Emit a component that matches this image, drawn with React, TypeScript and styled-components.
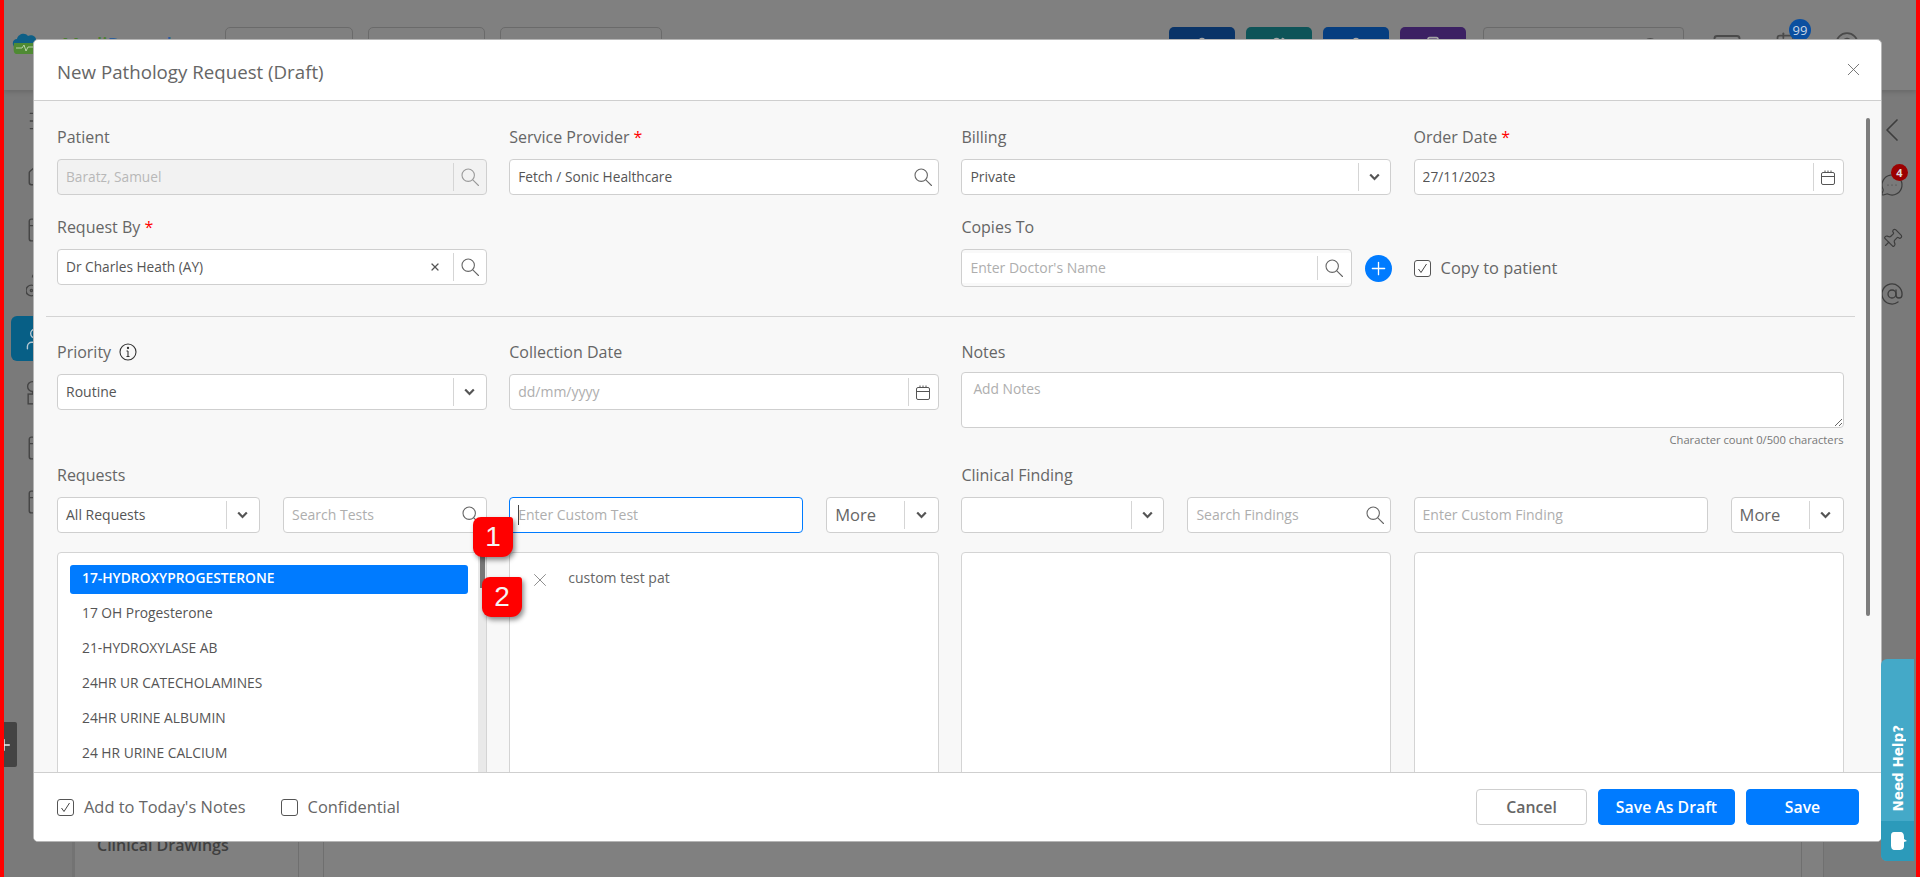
import React from "react";
import styled, { createGlobalStyle } from "styled-components";
import {
  AtSign, Calendar, ChevronLeft, CircleHelp, Home, Mail, Menu, MessageCircleMore,
  Pin, Plus, Search as LucideSearch, User, Users, X,
} from "lucide-react";

const GlobalStyle = createGlobalStyle`
  html, body { margin: 0; padding: 0; height: 100%; overflow: hidden; }
  body { font-family: "Open Sans", "Liberation Sans", sans-serif; }
  * { box-sizing: border-box; }
`;

const Page = styled.div`
  position: relative;
  width: 1920px;
  height: 877px;
  overflow: hidden;
  display: flex;
  flex-direction: column;
  background: #808080;
  border-left: 4px solid #ff0000;
  border-right: 4px solid #ff0000;
`;

const TopBar = styled.header`
  height: 90px;
  flex: none;
  display: flex;
  align-items: flex-start;
  padding: 27px 24px 0 8px;
  background: #808080;
  box-shadow: 0 2px 5px rgba(0, 0, 0, 0.15);
  position: relative;
  z-index: 1;
`;

const Logo = styled.div`
  width: 50px;
  flex: none;
  padding-top: 5px;
`;

const Brand = styled.div`
  width: 163px;
  flex: none;
  padding-top: 5px;
  font-size: 19px;
  font-weight: 600;
  color: #2c5d9a;
  & > b { font-weight: 600; color: #4a7f2f; }
`;

const OutlineButton = styled.div<{ $w: number; $blue?: boolean }>`
  width: ${(p) => p.$w}px;
  height: 40px;
  flex: none;
  margin-right: 15px;
  border: 1px solid #6a6a6a;
  border-radius: 5px;
  padding-top: 8px;
  text-align: center;
  font-size: 16px;
  color: ${(p) => (p.$blue ? "#0a4a9c" : "#4a4a4a")};
`;

const Spacer = styled.div`
  flex: 1;
`;

const ColorButton = styled.div<{ $bg: string }>`
  width: 66px;
  height: 40px;
  flex: none;
  margin-right: 11px;
  border-radius: 5px;
  background: ${(p) => p.$bg};
  color: #a5a5a5;
  display: flex;
  justify-content: center;
  padding-top: 9px;
`;

const TopSearch = styled.div`
  width: 201px;
  height: 40px;
  flex: none;
  margin: 0 28px 0 6px;
  border: 1px solid #6a6a6a;
  border-radius: 4px;
  display: flex;
  justify-content: flex-end;
  padding: 8px 22px 0 0;
  color: #4d4d4d;
`;

const TopIcon = styled.div<{ $w: number }>`
  position: relative;
  width: ${(p) => p.$w}px;
  flex: none;
  padding-top: 4px;
  color: #4a4a4a;
`;

const CountBadge = styled.span`
  position: absolute;
  left: 15px;
  top: -8px;
  width: 22px;
  height: 22px;
  border-radius: 50%;
  background: #0b4fa0;
  color: #c9d6e6;
  font-size: 13px;
  line-height: 22px;
  text-align: center;
`;

const Workspace = styled.div`
  flex: 1;
  min-height: 0;
  display: flex;
`;

const LeftRail = styled.nav`
  width: 68px;
  flex: none;
  padding: 8px 0 0 7px;
  display: flex;
  flex-direction: column;
  gap: 9.5px;
  background: #7a7a7a;
`;

const RailItem = styled.div<{ $active?: boolean }>`
  width: 46px;
  height: 45px;
  border-radius: 6px;
  display: flex;
  align-items: center;
  padding-left: ${(p) => (p.$active ? 11 : 15)}px;
  background: ${(p) => (p.$active ? "#075f86" : "transparent")};
  color: ${(p) => (p.$active ? "#b5c7d2" : "#444")};
`;

const MenuColumn = styled.aside`
  width: 227px;
  flex: none;
  border-left: 3px solid #737373;
  border-right: 1px solid #6f6f6f;
  display: flex;
  flex-direction: column;
  justify-content: flex-end;
  padding: 0 0 20px 22px;
`;

const MenuItem = styled.div`
  font-size: 16px;
  font-weight: 600;
  line-height: 24px;
  color: #3f3f3f;
`;

const Main = styled.main`
  margin-left: 24px;
  width: 1479px;
  flex: none;
  border-left: 1px solid #6f6f6f;
  border-right: 1px solid #6f6f6f;
`;

const RightRail = styled.aside`
  flex: 1;
  margin-left: 21px;
  padding: 28px 0 0 56px;
  display: flex;
  flex-direction: column;
  gap: 30.5px;
  background: #7a7a7a;
  border-left: 1px solid #707070;
`;

const RailIcon = styled.div`
  position: relative;
  width: 24px;
  height: 24px;
  color: #3d3d3d;
  display: flex;
  align-items: center;
  justify-content: center;
`;

const RailBadge = styled.span`
  position: absolute;
  right: -4px;
  top: -9px;
  width: 17px;
  height: 17px;
  border-radius: 50%;
  background: #9c0000;
  color: #ddd;
  font-size: 11px;
  font-weight: 700;
  line-height: 17px;
  text-align: center;
`;

const DarkTab = styled.div`
  position: absolute;
  left: 0;
  top: 722px;
  width: 13px;
  height: 45px;
  background: #444;
  border-radius: 0 2px 2px 0;
  color: #eee;
  display: flex;
  align-items: center;
  overflow: hidden;
  & > svg { flex: none; margin-left: -9px; }
`;

const HelpTab = styled.div`
  position: absolute;
  left: 1877px;
  top: 659px;
  width: 33px;
  height: 202px;
  z-index: 3;
  display: flex;
  flex-direction: column;
  border-radius: 6px 0 0 6px;
  overflow: hidden;
  background: #44a9c8;
`;

const HelpLabel = styled.div`
  flex: 1;
  display: flex;
  align-items: flex-start;
  justify-content: center;
  padding-top: 66px;
  & > span {
    writing-mode: vertical-rl;
    transform: rotate(180deg);
    color: #fff;
    font-family: "DejaVu Sans", sans-serif;
    font-size: 13.5px;
    font-weight: 700;
    line-height: 16px;
  }
`;

const HelpIcon = styled.div`
  height: 40px;
  flex: none;
  background: #2c9aba;
  display: flex;
  align-items: center;
  justify-content: center;
`;

const Modal = styled.section`
  position: absolute;
  left: 29px;
  top: 39px;
  width: 1849px;
  height: 803px;
  z-index: 2;
  display: flex;
  flex-direction: column;
  background: #fff;
  border-radius: 5px;
  border: 1px solid #b5b5b5;
  overflow: hidden;
`;

const ModalHeader = styled.div`
  height: 61px;
  flex: none;
  display: flex;
  align-items: center;
  justify-content: space-between;
  padding: 3px 17px 0 23px;
  border-bottom: 1px solid #cfcfcf;
`;

const Title = styled.h1`
  margin: 0;
  font-size: 18.7px;
  font-weight: 500;
  color: #666;
`;

const CloseButton = styled.button`
  border: none;
  background: none;
  padding: 0;
  display: flex;
  color: #666;
  transform: translateY(-2px);
`;

const ModalBody = styled.div`
  position: relative;
  flex: 1;
  min-height: 0;
  overflow: hidden;
  padding: 25px 0 0 23px;
  background: #f8f8f8;
`;

const BodyScrollThumb = styled.div`
  position: absolute;
  left: 1832px;
  top: 17px;
  width: 4px;
  height: 498px;
  border-radius: 2px;
  background: #7d7d7d;
`;

const Grid = styled.div<{ $gap?: number; $mt?: number }>`
  width: 1787px;
  display: grid;
  grid-template-columns: repeat(4, 430px);
  column-gap: 22.2px;
  row-gap: ${(p) => p.$gap ?? 0}px;
  margin-top: ${(p) => p.$mt ?? 0}px;
  align-items: start;
`;

const Label = styled.label`
  display: flex;
  align-items: center;
  height: 22px;
  margin-bottom: 11px;
  font-size: 16px;
  font-weight: 500;
  color: #666;
  white-space: pre;
  & > svg { margin-left: 8px; }
`;

const Req = styled.span`
  color: #f00;
`;

const NotesLabel = styled(Label)`
  margin-bottom: 9px;
`;

const Box = styled.div<{ $disabled?: boolean; $focus?: boolean; $h?: number }>`
  position: relative;
  height: ${(p) => p.$h ?? 36}px;
  display: flex;
  align-items: stretch;
  border: 1px solid ${(p) => (p.$focus ? "#007bff" : "#cfcfcf")};
  border-radius: 4px;
  background: ${(p) => (p.$disabled ? "#f2f2f2" : "#fff")};
  overflow: hidden;
`;

const CopiesBox = styled(Box)`
  flex: none;
  width: 391px;
  padding: 3px 0;
  background: #f9f9f9;
`;

const TextInput = styled.input<{ $muted?: boolean }>`
  flex: 1;
  min-width: 0;
  border: none;
  outline: none;
  background: transparent;
  padding: 0 0 2px 8px;
  font: 400 13.7px "Open Sans", sans-serif;
  color: ${(p) => (p.$muted ? "#b8b8b8" : "#555")};
  &::placeholder { color: #aeaeae; opacity: 1; font-size: 14px; }
`;

const WhiteInput = styled(TextInput)`
  background: #fff;
`;

const Value = styled.div<{ $large?: boolean }>`
  flex: 1;
  display: flex;
  align-items: center;
  padding: 0 0 2px 8px;
  font-size: ${(p) => (p.$large ? 16.5 : 14)}px;
  color: ${(p) => (p.$large ? "#666" : "#555")};
`;

const Slot = styled.div<{ $w: number; $sep?: boolean; $white?: boolean }>`
  position: relative;
  width: ${(p) => p.$w}px;
  flex: none;
  display: flex;
  align-items: center;
  justify-content: center;
  background: ${(p) => (p.$white ? "#fff" : "transparent")};
  &::before {
    content: "";
    display: ${(p) => (p.$sep ? "block" : "none")};
    position: absolute;
    left: 0;
    top: 3px;
    bottom: 3px;
    width: 1px;
    background: #d5d5d5;
  }
`;

const Caret = styled.span`
  position: absolute;
  left: 8px;
  top: 7px;
  width: 1px;
  height: 20px;
  background: #444;
`;

const CopiesRow = styled.div`
  display: flex;
  align-items: center;
  gap: 13px;
`;

const PlusCircle = styled.button`
  width: 27px;
  height: 27px;
  flex: none;
  padding: 0;
  border: none;
  border-radius: 50%;
  background: #007bff;
  color: #fff;
  display: flex;
  align-items: center;
  justify-content: center;
`;

const CheckRow = styled.div<{ $mt?: number }>`
  display: flex;
  align-items: center;
  gap: 10px;
  margin-top: ${(p) => p.$mt ?? 0}px;
  font-size: 16.4px;
  font-weight: 500;
  color: #666;
  line-height: 22px;
`;

const CheckBox = styled.span`
  width: 17px;
  height: 17px;
  flex: none;
  border: 1px solid #555;
  border-radius: 3px;
  background: #fff;
  display: flex;
  align-items: center;
  justify-content: center;
`;

const Divider = styled.hr`
  width: 1809px;
  height: 1px;
  margin: 29px 0 24px -11px;
  border: none;
  background: #d4d4d4;
`;

const NotesArea = styled.textarea`
  display: block;
  width: 100%;
  height: 56px;
  border: 1px solid #cfcfcf;
  border-radius: 4px;
  background: #fff;
  padding: 6px 11px;
  outline: none;
  resize: vertical;
  font: 400 13.8px "Open Sans", sans-serif;
  &::placeholder { color: #aeaeae; opacity: 1; }
`;

const CharCount = styled.div`
  margin-top: 5px;
  height: 14px;
  font-size: 11.2px;
  line-height: 14px;
  color: #777;
  text-align: right;
`;

const Pair = styled.div`
  display: grid;
  grid-template-columns: 203px 204px;
  column-gap: 23px;
`;

const CustomPair = styled.div`
  display: grid;
  grid-template-columns: 294px 113px;
  column-gap: 23px;
`;

const ListPanel = styled.div`
  position: relative;
  height: 320px;
  background: #fff;
  border: 1px solid #d4d4d4;
  border-radius: 4px 4px 0 0;
  padding: 12px 18px 0 12px;
  display: flex;
  flex-direction: column;
  gap: 6px;
  overflow: hidden;
`;

const Track = styled.div`
  position: absolute;
  right: 0;
  top: 0;
  bottom: 0;
  width: 8px;
  background: #e9e9e9;
`;

const Thumb = styled.div`
  position: absolute;
  right: 1px;
  top: 2px;
  width: 5px;
  height: 33px;
  background: #777;
`;

const ListRow = styled.div<{ $active?: boolean }>`
  height: 29px;
  flex: none;
  display: flex;
  align-items: center;
  padding: 0 0 5px 12px;
  border-radius: 3px;
  font-size: 13.8px;
  font-weight: ${(p) => (p.$active ? 600 : 400)};
  background: ${(p) => (p.$active ? "#007bff" : "transparent")};
  color: ${(p) => (p.$active ? "#fff" : "#555")};
`;

const TagRow = styled.div`
  display: flex;
  align-items: center;
  gap: 17px;
  padding: 2px 0 0 7px;
  font-size: 14px;
  color: #666;
  line-height: 20px;
`;

const TagClose = styled.span`
  display: flex;
  color: #777;
  transform: translateY(2px);
`;

const ModalFooter = styled.div`
  height: 69px;
  flex: none;
  display: flex;
  align-items: center;
  padding: 0 22px 0 23px;
  border-top: 1px solid #cfcfcf;
  background: #fff;
`;

const FooterChecks = styled.div`
  flex: 1;
  display: flex;
  gap: 35px;
`;

const FooterButton = styled.button<{ $primary?: boolean; $w: number }>`
  width: ${(p) => p.$w}px;
  height: 36px;
  margin-left: 11px;
  border-radius: 4px;
  border: 1px solid ${(p) => (p.$primary ? "#007bff" : "#cfcfcf")};
  background: ${(p) => (p.$primary ? "#007bff" : "#fff")};
  color: ${(p) => (p.$primary ? "#fff" : "#666")};
  font: 600 15.8px "Open Sans", sans-serif;
`;

const Callout = styled.div<{ $x: number; $y: number }>`
  position: absolute;
  left: ${(p) => p.$x}px;
  top: ${(p) => p.$y}px;
  width: 40px;
  height: 40px;
  z-index: 4;
  display: flex;
  align-items: center;
  justify-content: center;
  background: #ff0000;
  border-radius: 8px 3px 11px 9px;
  box-shadow: 2px 3px 5px rgba(0, 0, 0, 0.45);
  color: #f4f4f4;
  font-family: "Liberation Sans", sans-serif;
  font-size: 28px;
  line-height: 1;
`;

const SearchIcon = ({ color = "#666" }: { color?: string }) => (
  <svg width="18" height="18" viewBox="0 0 18 18" fill="none" stroke={color} strokeWidth="1.1">
    <circle cx="7.2" cy="7.2" r="6.2" />
    <path d="M11.8 11.8 L17.5 17.5" strokeLinecap="round" />
  </svg>
);

const Chevron = () => (
  <svg width="11" height="8" viewBox="0 0 11 8" fill="none" stroke="#555" strokeWidth="2.2">
    <path d="M1.2 1.5 L5.5 6 L9.8 1.5" />
  </svg>
);

const CalendarIcon = () => (
  <svg width="14" height="15" viewBox="0 0 14 15" fill="none" stroke="#555" strokeWidth="1">
    <rect x="0.5" y="2.5" width="13" height="12" rx="1.5" />
    <path d="M0.5 6.5 H13.5 M4 0.5 V3 M7 0.5 V3 M10 0.5 V3" />
  </svg>
);

const CheckMark = () => (
  <svg width="11" height="11" viewBox="0 0 11 11" fill="none" stroke="#444" strokeWidth="1">
    <path d="M1.5 6 L4 9.5 L9.5 1" />
  </svg>
);

const LogoMark = () => (
  <svg width="28" height="22" viewBox="0 0 28 22">
    <path d="M3 16 C-1 12 1 7 5 7 C6 2 13 0 16 4 C20 2 25 5 24 9 L22 16 Z" fill="#0e5f86" />
    <path d="M2 11 H28 V20 a2 2 0 0 1 -2 2 H5 C2 22 1 20 2 11 Z" fill="#4f8a33" />
    <path d="M4 16 H10 L12 13 L14 19 L16 15 H22" fill="none" stroke="#cfe0c5" strokeWidth="0.8" />
  </svg>
);

type RailGlyph = React.FC<{ size?: number; strokeWidth?: number }>;

const glyph = (children: React.ReactNode): RailGlyph => ({ size = 24, strokeWidth = 1.3 }) => (
  <svg width={size} height={size} viewBox="0 0 24 24" fill="none" stroke="currentColor" strokeWidth={strokeWidth}>
    {children}
  </svg>
);

const DocGlyph = glyph(<><rect x="3" y="2" width="18" height="20" rx="2" /><path d="M3 8 H21 M8 2 V8" /></>);
const OrgGlyph = glyph(<><circle cx="6" cy="6" r="4.5" /><rect x="2" y="13" width="8" height="9" /><path d="M6 10.5 V13" /></>);
const RideGlyph = glyph(<><circle cx="5" cy="18" r="5" /><circle cx="5" cy="18" r="1" /><path d="M10 12 C12 8 16 8 18 10 M6 6 a3 3 0 1 1 6 0" /></>);

const tests = [
  "17-HYDROXYPROGESTERONE",
  "17 OH Progesterone",
  "21-HYDROXYLASE AB",
  "24HR UR CATECHOLAMINES",
  "24HR URINE ALBUMIN",
  "24 HR URINE CALCIUM",
];

const railIcons: RailGlyph[] = [Menu, Home, DocGlyph, RideGlyph, User, OrgGlyph, DocGlyph, DocGlyph];
const colorButtons: { bg: string; Icon: typeof User }[] = [
  { bg: "#0a3468", Icon: User },
  { bg: "#0e5458", Icon: Users },
  { bg: "#063e80", Icon: User },
  { bg: "#3c2163", Icon: Pin },
];

export default function App() {
  return (
    <Page>
      <GlobalStyle />
      <TopBar>
        <Logo><LogoMark /></Logo>
        <Brand><b>Medi</b>Records</Brand>
        <OutlineButton $w={128}>Fast | Team</OutlineButton>
        <OutlineButton $w={117}>Free Form</OutlineButton>
        <OutlineButton $w={162} $blue>Recent Search |</OutlineButton>
        <Spacer />
        {colorButtons.map(({ bg, Icon }, i) => (
          <ColorButton key={i} $bg={bg}><Icon size={20} /></ColorButton>
        ))}
        <TopSearch><LucideSearch size={20} strokeWidth={1.5} /></TopSearch>
        <TopIcon $w={62}><Mail size={30} strokeWidth={1.5} /></TopIcon>
        <TopIcon $w={60}>
          <Calendar size={28} strokeWidth={1.5} />
          <CountBadge>99</CountBadge>
        </TopIcon>
        <TopIcon $w={58}><CircleHelp size={26} strokeWidth={1.5} /></TopIcon>
      </TopBar>
      <Workspace>
        <LeftRail>
          {railIcons.map((Icon, i) => (
            <RailItem key={i} $active={i === 4}><Icon size={26} strokeWidth={1.3} /></RailItem>
          ))}
        </LeftRail>
        <MenuColumn><MenuItem>Clinical Drawings</MenuItem></MenuColumn>
        <Main />
        <RightRail>
          <RailIcon><ChevronLeft size={40} strokeWidth={1} style={{ flex: "none" }} /></RailIcon>
          <RailIcon>
            <MessageCircleMore size={24} strokeWidth={1.2} />
            <RailBadge>4</RailBadge>
          </RailIcon>
          <RailIcon><Pin size={22} strokeWidth={1.3} style={{ transform: "rotate(45deg)" }} /></RailIcon>
          <RailIcon><AtSign size={24} strokeWidth={1.3} /></RailIcon>
        </RightRail>
      </Workspace>

      <DarkTab><Plus size={18} /></DarkTab>

      <Modal>
        <ModalHeader>
          <Title>New Pathology Request (Draft)</Title>
          <CloseButton aria-label="Close"><X size={21} strokeWidth={1} /></CloseButton>
        </ModalHeader>
        <ModalBody>
          <BodyScrollThumb />
          <Grid $gap={21}>
            <div>
              <Label>Patient</Label>
              <Box $disabled>
                <TextInput $muted readOnly defaultValue="Baratz, Samuel" />
                <Slot $w={33} $sep><SearchIcon color="#9a9a9a" /></Slot>
              </Box>
            </div>
            <div>
              <Label>Service Provider <Req>*</Req></Label>
              <Box>
                <TextInput readOnly defaultValue="Fetch / Sonic Healthcare" />
                <Slot $w={30}><SearchIcon /></Slot>
              </Box>
            </div>
            <div>
              <Label>Billing</Label>
              <Box>
                <Value>Private</Value>
                <Slot $w={32} $sep><Chevron /></Slot>
              </Box>
            </div>
            <div>
              <Label>Order Date <Req>*</Req></Label>
              <Box>
                <TextInput readOnly defaultValue="27/11/2023" />
                <Slot $w={30} $sep><CalendarIcon /></Slot>
              </Box>
            </div>
            <div>
              <Label>Request By <Req>*</Req></Label>
              <Box>
                <TextInput readOnly defaultValue="Dr Charles Heath (AY)" />
                <Slot $w={36}><X size={12} strokeWidth={2.4} color="#555" /></Slot>
                <Slot $w={33} $sep><SearchIcon /></Slot>
              </Box>
            </div>
            <div />
            <div>
              <Label>Copies To</Label>
              <CopiesRow>
                <CopiesBox $h={38}>
                  <WhiteInput placeholder="Enter Doctor's Name" readOnly />
                  <Slot $w={34} $sep $white><SearchIcon /></Slot>
                </CopiesBox>
                <PlusCircle aria-label="Add"><Plus size={21} strokeWidth={1.5} /></PlusCircle>
              </CopiesRow>
            </div>
            <CheckRow $mt={41}>
              <CheckBox><CheckMark /></CheckBox>
              Copy to patient
            </CheckRow>
          </Grid>

          <Divider />

          <Grid>
            <div>
              <Label>
                Priority
                <svg width="18" height="18" viewBox="0 0 18 18" fill="none" stroke="#333" strokeWidth="1.1">
                  <circle cx="9" cy="9" r="8" />
                  <path d="M9 8 V13.5 M7.5 8 H9 M7.5 13.5 H10.5" />
                  <circle cx="9" cy="5" r="0.6" fill="#333" />
                </svg>
              </Label>
              <Box>
                <Value>Routine</Value>
                <Slot $w={33} $sep><Chevron /></Slot>
              </Box>
            </div>
            <div>
              <Label>Collection Date</Label>
              <Box>
                <TextInput placeholder="dd/mm/yyyy" readOnly />
                <Slot $w={30} $sep><CalendarIcon /></Slot>
              </Box>
            </div>
            <div style={{ gridColumn: "3 / span 2" }}>
              <NotesLabel>Notes</NotesLabel>
              <NotesArea placeholder="Add Notes" readOnly />
              <CharCount>Character count 0/500 characters</CharCount>
            </div>
          </Grid>

          <Grid $mt={17}>
            <Label>Requests</Label>
            <div />
            <Label>Clinical Finding</Label>
            <div />
            <Pair>
              <Box>
                <Value>All Requests</Value>
                <Slot $w={33} $sep><Chevron /></Slot>
              </Box>
              <Box>
                <TextInput placeholder="Search Tests" readOnly />
                <Slot $w={30}><SearchIcon /></Slot>
              </Box>
            </Pair>
            <CustomPair>
              <Box $focus>
                <TextInput placeholder="Enter Custom Test" readOnly />
                <Caret />
              </Box>
              <Box>
                <Value $large>More</Value>
                <Slot $w={34} $sep><Chevron /></Slot>
              </Box>
            </CustomPair>
            <Pair>
              <Box>
                <Value />
                <Slot $w={32} $sep><Chevron /></Slot>
              </Box>
              <Box>
                <TextInput placeholder="Search Findings" readOnly />
                <Slot $w={30}><SearchIcon /></Slot>
              </Box>
            </Pair>
            <CustomPair>
              <Box>
                <TextInput placeholder="Enter Custom Finding" readOnly />
              </Box>
              <Box>
                <Value $large>More</Value>
                <Slot $w={34} $sep><Chevron /></Slot>
              </Box>
            </CustomPair>
          </Grid>

          <Grid $mt={19}>
            <ListPanel>
              {tests.map((t, i) => (
                <ListRow key={t} $active={i === 0}>{t}</ListRow>
              ))}
              <Track><Thumb /></Track>
            </ListPanel>
            <ListPanel>
              <TagRow>
                <TagClose><X size={22} strokeWidth={0.9} /></TagClose>
                custom test pat
              </TagRow>
            </ListPanel>
            <ListPanel />
            <ListPanel />
          </Grid>
        </ModalBody>
        <ModalFooter>
          <FooterChecks>
            <CheckRow>
              <CheckBox><CheckMark /></CheckBox>
              Add to Today's Notes
            </CheckRow>
            <CheckRow>
              <CheckBox />
              Confidential
            </CheckRow>
          </FooterChecks>
          <FooterButton $w={111}>Cancel</FooterButton>
          <FooterButton $w={137} $primary>Save As Draft</FooterButton>
          <FooterButton $w={113} $primary>Save</FooterButton>
        </ModalFooter>
      </Modal>

      <Callout $x={469} $y={517}>1</Callout>
      <Callout $x={478} $y={577}>2</Callout>

      <HelpTab>
        <HelpLabel><span>Need Help?</span></HelpLabel>
        <HelpIcon>
          <svg width="18" height="20" viewBox="0 0 18 20" fill="#fff">
            <path d="M5 1 H11 C14 1 15 3 15 6 V8 L18 10 L15 11 V15 C15 18 13 19 10 19 H6 C3 19 2 17 2 14 V5 C2 2 3 1 5 1 Z" />
          </svg>
        </HelpIcon>
      </HelpTab>
    </Page>
  );
}
